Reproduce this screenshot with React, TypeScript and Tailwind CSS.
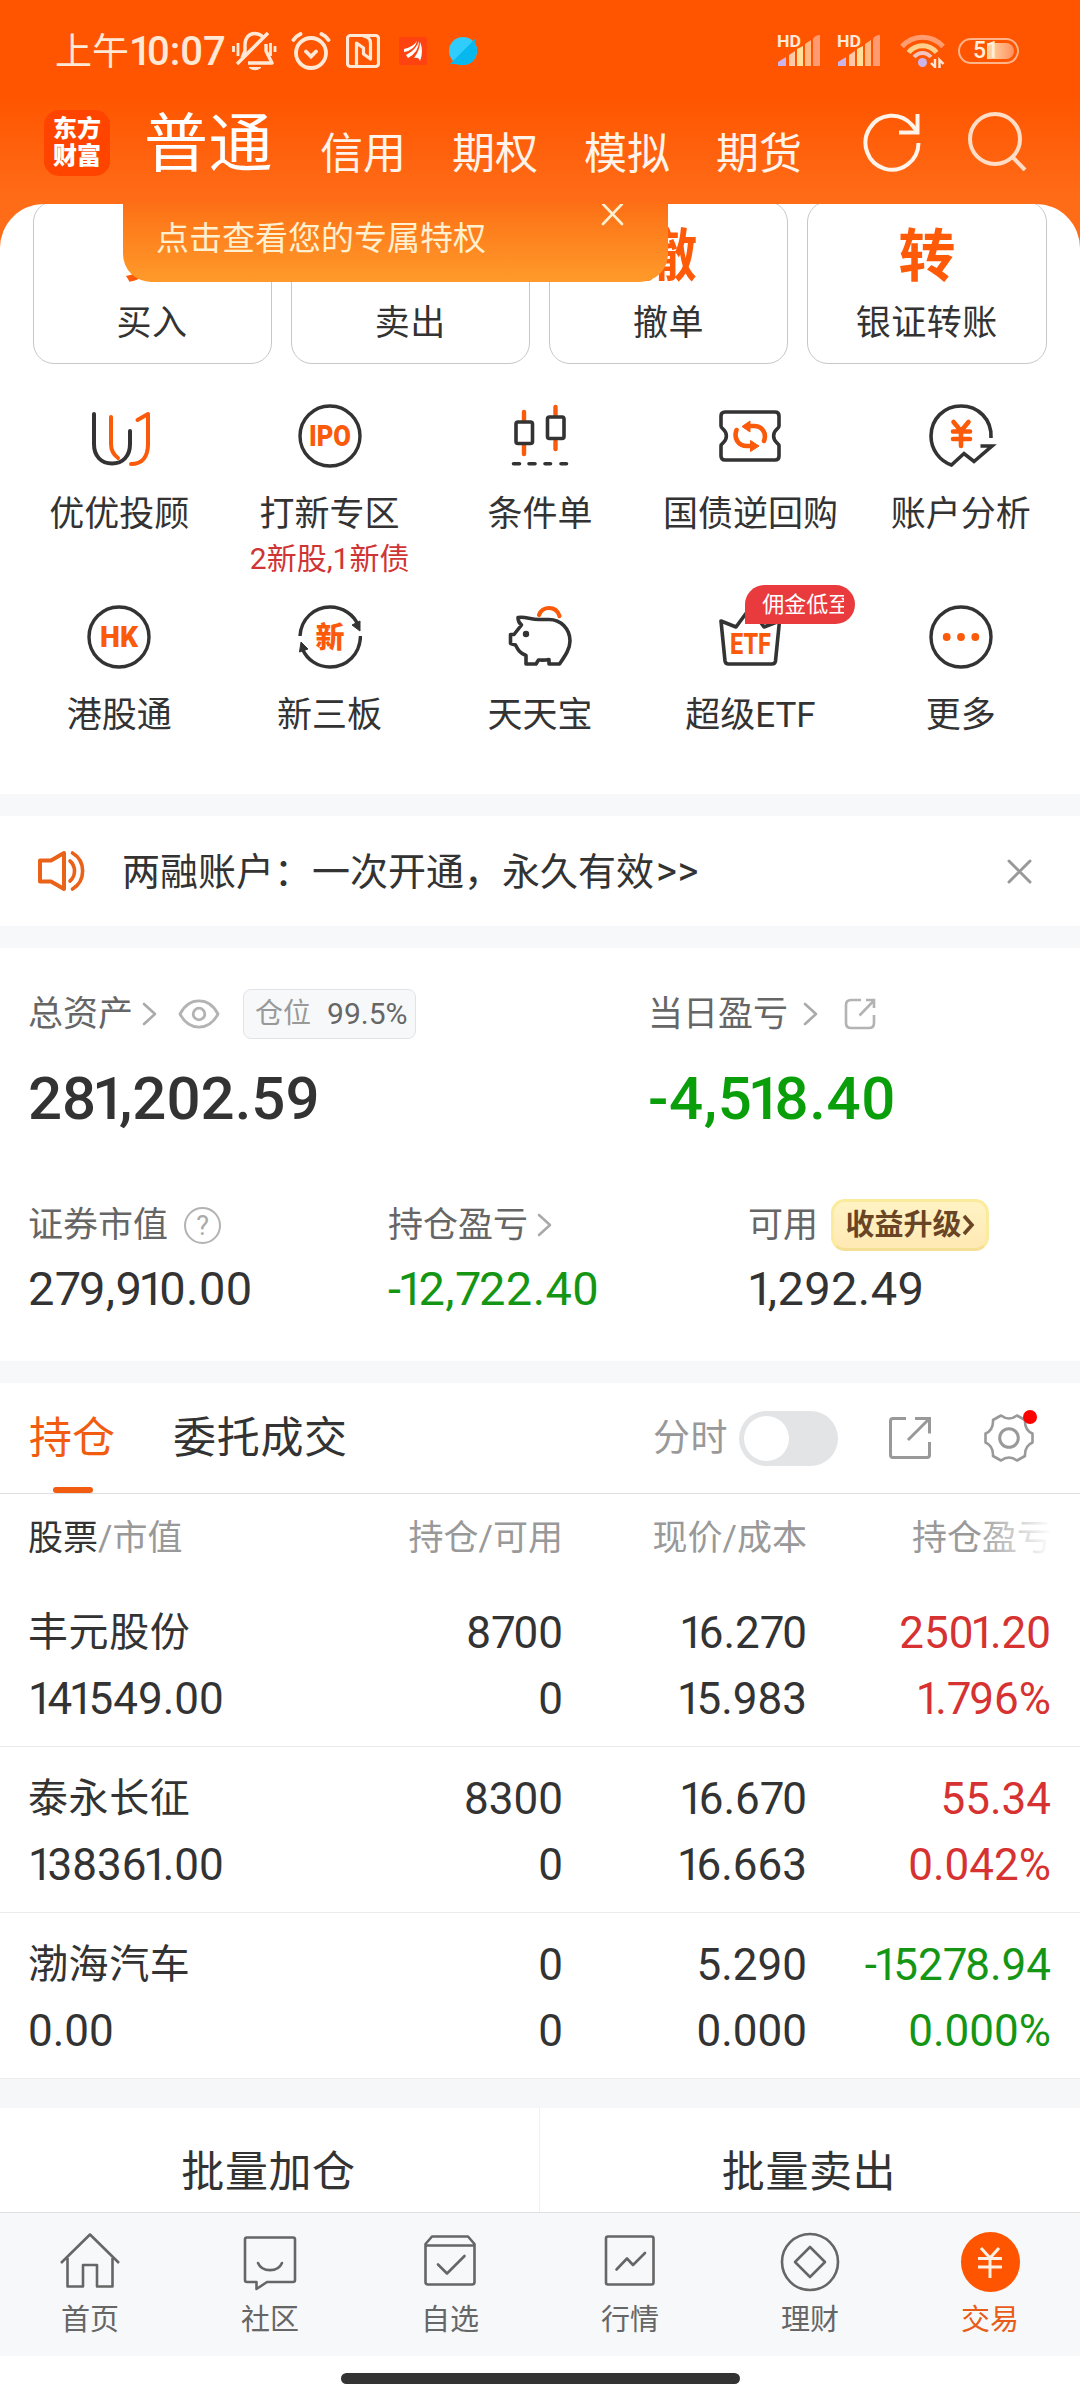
import React from 'react';

interface Shortcut {
  label: string;
  icon: React.ReactNode;
  note?: string;
  badge?: string;
}

interface Holding {
  name: string;
  marketValue: string;
  position: string;
  available: string;
  price: string;
  cost: string;
  profit: string;
  ratio: string;
  up: boolean;
}

const DARK = '#333333';
const ORANGE = '#fa5a0a';

// Figures "1" and "7" are set tighter than the other digits,
// and so is whatever stands right before a "1"
const Num: React.FC<{ value: string }> = ({ value }) => (
  <>
    {value.split(/([^1](?=1)|1|7)/).map((part, idx) => {
      if (idx % 2 === 0) return part;
      if (part === '1') {
        return <span key={idx} className="tracking-[-0.12em]">1</span>;
      }
      if (part === '7') {
        return <span key={idx} className="tracking-[-0.05em]">7</span>;
      }
      return <span key={idx} className="tracking-[-0.07em]">{part}</span>;
    })}
  </>
);

const Chevron = () => (
  <svg className="w-4 h-6" viewBox="0 0 16 24" fill="none" stroke="#aaaaaa" strokeWidth="2.6" strokeLinecap="round" strokeLinejoin="round">
    <path d="M2 2L13 12L2 22" />
  </svg>
);

const CircleText: React.FC<{ text: string; width: number }> = ({ text, width }) => (
  <svg className="w-16 h-16" viewBox="0 0 64 64">
    <circle cx="32" cy="32" r="30" fill="none" stroke={DARK} strokeWidth="3.4" />
    <text x="32" y="42" textAnchor="middle" textLength={width} lengthAdjust="spacingAndGlyphs" fontSize="29" fontWeight="900" fill={ORANGE}>
      {text}
    </text>
  </svg>
);

const shortcuts: Shortcut[] = [
  {
    label: '优优投顾',
    icon: (
      <svg className="w-16 h-16" viewBox="0 0 64 64" fill="none" strokeWidth="4" strokeLinecap="round" strokeLinejoin="round">
        <path d="M7 10V40C7 52 14 59.5 25 59.5S43 52 43 40V27" stroke={DARK} />
        <path d="M24 13V40C24 47 27 51 31 54M50.5 16L61 10V40C61 53 55 60 44 60" stroke={ORANGE} />
      </svg>
    ),
  },
  { label: '打新专区', note: '2新股,1新债', icon: <CircleText text="IPO" width={42} /> },
  {
    label: '条件单',
    icon: (
      <svg className="w-16 h-16" viewBox="0 0 64 64" fill="none" strokeWidth="3.6" strokeLinecap="round">
        <path d="M16 8V17M16 41V50M47.5 3V12M47.5 37V45" stroke={ORANGE} strokeWidth="4.4" />
        <rect x="8" y="18" width="16.5" height="21.5" rx="2" stroke={DARK} />
        <rect x="39.5" y="13" width="16.5" height="21.5" rx="2" stroke={DARK} />
        <path d="M5.5 59.7H11.5M21 59.7H27M37 59.7H42.5M53 59.7H58.5" stroke={DARK} />
      </svg>
    ),
  },
  {
    label: '国债逆回购',
    icon: (
      <svg className="w-16 h-16" viewBox="0 0 64 64" fill="none" strokeWidth="3.6" strokeLinejoin="round">
        <path
          d="M7 8H57Q61 8 61 12V22Q61 23.5 59 25C54.5 29 54.5 35 59 39Q61 40.5 61 42V52Q61 56 57 56H7Q3 56 3 52V42Q3 40.5 5 39C9.5 35 9.5 29 5 25Q3 23.5 3 22V12Q3 8 7 8Z"
          stroke={DARK}
        />
        <path d="M18.5 26C15.5 34 20 42 29 42H33M46 37C49 29 44 22 36 22H31" stroke={ORANGE} strokeWidth="4.6" strokeLinecap="round" />
        <path d="M32 17V28L24 22.5ZM32.5 36.5V47.5L41 42Z" fill={ORANGE} stroke={ORANGE} strokeWidth="1" />
      </svg>
    ),
  },
  {
    label: '账户分析',
    icon: (
      <svg className="w-16 h-16 overflow-visible" viewBox="0 0 64 64" fill="none" strokeWidth="3.6">
        <path d="M62 34C63 15 49 2 32 2C15 2 2 15 2 32C2 46 11 57 22.5 61L35 49.5L45 57.5L63 42H51.5" stroke={DARK} />
        <path d="M24.5 18L32 27L39.5 18M24 27.5H41M24 35H41M32 27V42" stroke={ORANGE} strokeWidth="4.6" strokeLinecap="round" />
      </svg>
    ),
  },
  { label: '港股通', icon: <CircleText text="HK" width={38} /> },
  {
    label: '新三板',
    icon: (
      <svg className="w-16 h-16" viewBox="0 0 64 64">
        <path d="M2 31C3 14 16 2 32 2C45 2 56 10 60 20M62.5 31C62 49 49 62 32 62C20 62 9 55 4.5 44" fill="none" stroke={DARK} strokeWidth="3.4" />
        <path d="M54 20L62 16V26ZM1.5 47L3 37L10 44Z" fill={DARK} stroke={DARK} strokeWidth="1" />
        <text x="32" y="43" textAnchor="middle" fontSize="29" fontWeight="900" fill={ORANGE}>新</text>
      </svg>
    ),
  },
  {
    label: '天天宝',
    icon: (
      <svg className="w-16 h-16" viewBox="0 0 64 64" fill="none" strokeWidth="3.6" strokeLinejoin="round">
        <path d="M31 10C34 1 48 0 51.5 11" stroke={ORANGE} strokeWidth="4.2" strokeLinecap="round" />
        <path
          d="M10 12.5C17 11 22 14.5 31 14.5H41C53 14.5 62 24 62 36C62 44 57 51 51.5 59H41V54.5C36 55.5 33 55 30.5 55L28 59H18V50.5C12 48 10 45 7.5 40L2.5 38.5V29.5H6L13.5 20C11 18 10 16 10 12.5Z"
          stroke={DARK}
        />
        <circle cx="18" cy="29" r="3.2" fill={DARK} />
      </svg>
    ),
  },
  {
    label: '超级ETF',
    badge: '佣金低至',
    icon: (
      <svg className="w-16 h-16" viewBox="0 0 64 64">
        <path d="M3 16L18 22L32 3L46 22L61.5 16L57.5 56Q57 59 54 59H10.5Q7.5 59 7 56Z" fill="none" stroke={DARK} strokeWidth="3.6" strokeLinejoin="round" />
        <text x="32.5" y="48.5" textAnchor="middle" textLength="41" lengthAdjust="spacingAndGlyphs" fontSize="29" fontWeight="800" fill={ORANGE}>
          ETF
        </text>
      </svg>
    ),
  },
  {
    label: '更多',
    icon: (
      <svg className="w-16 h-16" viewBox="0 0 64 64">
        <circle cx="32" cy="32" r="30" fill="none" stroke={DARK} strokeWidth="3.4" />
        <g fill={ORANGE}>
          <circle cx="17.7" cy="32" r="3.9" />
          <circle cx="32" cy="32" r="3.9" />
          <circle cx="46.3" cy="32" r="3.9" />
        </g>
      </svg>
    ),
  },
];

const actions = [
  { mark: '买', label: '买入' },
  { mark: '卖', label: '卖出' },
  { mark: '撤', label: '撤单' },
  { mark: '转', label: '银证转账' },
];

const holdings: Holding[] = [
  { name: '丰元股份', marketValue: '141549.00', position: '8700', available: '0', price: '16.270', cost: '15.983', profit: '2501.20', ratio: '1.796%', up: true },
  { name: '泰永长征', marketValue: '138361.00', position: '8300', available: '0', price: '16.670', cost: '16.663', profit: '55.34', ratio: '0.042%', up: true },
  { name: '渤海汽车', marketValue: '0.00', position: '0', available: '0', price: '5.290', cost: '0.000', profit: '-15278.94', ratio: '0.000%', up: false },
];

const tabs = [
  {
    label: '首页',
    icon: <path d="M2 31L31 2.5L60 31M8.5 26V54.5H24V33H38V54.5H53.5V26" />,
  },
  {
    label: '社区',
    icon: (
      <>
        <path d="M8 5.5H54Q56 5.5 56 7.5V48Q56 50 54 50H28L17.5 57V50H8Q6 50 6 48V7.5Q6 5.5 8 5.5Z" />
        <path d="M19 31C23 40.5 39 40.5 43 31" strokeLinecap="round" />
      </>
    ),
  },
  {
    label: '自选',
    icon: (
      <>
        <path d="M13 4.5H49L55.5 12V50Q55.5 52.5 53 52.5H9Q6.5 52.5 6.5 50V12ZM6.5 13.5H55.5" />
        <path d="M19 32.5L28 41.5L45.5 24" strokeLinecap="round" />
      </>
    ),
  },
  {
    label: '行情',
    icon: (
      <>
        <rect x="7" y="4.5" width="47.5" height="48" rx="2" />
        <path d="M17.5 37.5L28 26.5L34 33L46 21" strokeLinecap="round" />
      </>
    ),
  },
  {
    label: '理财',
    icon: (
      <>
        <circle cx="31" cy="30" r="28" />
        <path d="M31 15L46 30L31 45L16 30Z" />
      </>
    ),
  },
  { label: '交易', active: true },
];

const Signal = () => (
  <svg className="w-[44px] h-8 overflow-visible" viewBox="0 0 44 32">
    <path d="M1 31V27L9 22V31Z" fill="#cdb4e8" />
    <path d="M12 31V20L18 16V31Z" fill="#ffc9a8" />
    <path d="M20 31V14L26 11V31Z" fill="#ffdf9a" />
    <path d="M28 31V9L34 5V31Z" fill="#ffb982" />
    <path d="M36 31V4Q38 0 43 0V31Z" fill="#ff9a72" />
    <text x="0" y="12" fontSize="16.5" fontWeight="700" fill="#ffe9d6" textLength="24" lengthAdjust="spacingAndGlyphs">HD</text>
  </svg>
);

const StatusBar = () => (
  <div className="h-[102px] flex items-center pl-[55px] pr-[61px]">
    <span className="w-[169px] text-[37px] leading-10 whitespace-nowrap text-[#ffe9d6] pt-[2px]">
      上午<span className="text-[40px] font-medium"><Num value="10:07" /></span>
    </span>
    <svg className="ml-[8px] w-[45px] h-10" viewBox="0 0 45 40" fill="none" stroke="#ffe9d6" strokeWidth="3.4">
      <path d="M10 27L13 20V14C13 7 17 2.5 22.5 2.5C26 2.5 29 4 31 6M34 13V20L40 32H16" strokeLinejoin="round" />
      <path d="M5 33L36 2" />
      <path d="M1.5 15V21M6 12V25M38.5 12V25M43 15V21" strokeWidth="2.8" />
      <path d="M17 36.5H29Q23 41 17 36.5Z" fill="#ffe9d6" strokeWidth="1" />
    </svg>
    <svg className="ml-[14px] w-10 h-10" viewBox="0 0 40 40" fill="none" stroke="#ffe9d6" strokeWidth="3.8" strokeLinecap="round">
      <circle cx="20" cy="22" r="15" />
      <path d="M2.5 9Q5 5 9.5 3M37.5 9Q35 5 30.5 3M15 20.5L20 25.5L25 20.5" />
    </svg>
    <svg className="ml-[15px] w-[34px] h-[34px]" viewBox="0 0 34 34" fill="none" stroke="#ffe9d6" strokeWidth="3.2" strokeLinejoin="round">
      <rect x="1.5" y="1.5" width="31" height="31" rx="3" />
      <path d="M10.5 32V9L17.5 14V20L24.5 25V9Q24.5 3 17 2" />
    </svg>
    <svg className="ml-[19px] w-7 h-7" viewBox="0 0 28 28">
      <rect width="28" height="28" rx="2" fill="#ff4310" />
      <path d="M5 12Q14 10 18 4Q16 13 5 15ZM7 18Q17 13 20 4Q20 15 9 21ZM15 21Q21 13 21 5Q25 14 21 24Q20 20 15 21Z" fill="#ffffff" />
    </svg>
    <svg className="ml-[22px] w-7 h-7" viewBox="0 0 28 28">
      <circle cx="14" cy="14" r="14" fill="#30ccfb" />
      <path d="M27 1L1 27H7Q11 28.5 16 28Q27 26 28 14Q28 9 25.5 6Z" fill="#06b8ee" />
    </svg>
    <div className="flex-1" />
    <Signal />
    <div className="w-4" />
    <Signal />
    <svg className="ml-[19px] w-[46px] h-[34px]" viewBox="0 0 46 34" fill="none" strokeWidth="5">
      <path d="M2 12.5C13 0 32 0 43 12.5" stroke="#ff9d70" />
      <path d="M8.5 18.5C16 9.5 29 9.5 36.5 18.5" stroke="#ffd08c" />
      <path d="M14 23C19 17.5 26 17.5 31 23" stroke="#f3c3c0" strokeWidth="4" />
      <circle cx="22.5" cy="28.5" r="4.5" fill="#cdb4e8" />
      <path d="M35 25V33L31 29M39.5 34V26L43.5 30" stroke="#ffe9d6" strokeWidth="2.4" />
    </svg>
    <div className="ml-[12px] w-[61px] h-[26px] rounded-full border-[2.5px] border-[#ffb48a] p-[3px] relative">
      <div className="ml-[24px] h-full rounded-r-full bg-linear-to-r from-[#ffd9a8] to-[#ff9160]" />
      <span className="absolute left-[13px] top-[-1px] text-[23px] leading-6 font-medium text-[#ffeedd]">51</span>
    </div>
  </div>
);

const Header = () => (
  <header className="h-[204px] shrink-0 bg-[linear-gradient(#ff5500_96px,#ff6d19_204px)]">
    <StatusBar />
    <div className="h-[82px] flex items-center pl-11 text-white">
      <div className="w-[66px] h-[66px] rounded-[15px] bg-[#ff4400] flex items-center justify-center text-[24px] leading-[27px] font-black text-center">
        东方<br />财富
      </div>
      <span className="ml-[34px] w-[136px] text-[64px] leading-[80px] pt-[3px] tracking-[0.5px]">普通</span>
      <nav className="ml-[40px] mt-[22px] flex gap-[46px] text-[43px] leading-[48px] text-[#fff3ea]">
        <span>信用</span>
        <span>期权</span>
        <span>模拟</span>
        <span>期货</span>
      </nav>
      <svg className="ml-[60px] -mt-[2px] w-[60px] h-[60px]" viewBox="0 0 60 60" fill="none" stroke="#fff3ea" strokeWidth="4">
        <path d="M56.5 31A26.5 27 0 1 1 50 13L55.5 20" />
        <path d="M55.5 2V20.5H37" />
      </svg>
      <svg className="ml-[45px] -mt-[4px] w-[60px] h-[60px]" viewBox="0 0 60 60" fill="none" stroke="#ffdcc6" strokeWidth="4">
        <circle cx="28" cy="28" r="25" />
        <path d="M45.5 46L58 59" />
      </svg>
    </div>
  </header>
);

const QuickTrade = () => (
  <section className="h-[590px] shrink-0 bg-[#ff6c18]">
    <div className="relative h-full bg-white rounded-t-[44px] overflow-hidden">
      <div className="-mt-[3px] pl-[32.5px] pr-[33.5px] grid grid-cols-4 gap-[19px]">
        {actions.map(item => (
          <div key={item.label} className="h-[163px] rounded-[21px] border border-[#c8c8c8] flex flex-col items-center pt-[23px]">
            <span className="text-[57px] leading-[64px] font-bold text-[#ff5a08]">{item.mark}</span>
            <span className="mt-[15px] text-[35px] leading-10 tracking-[0.5px] text-[#333333]">{item.label}</span>
          </div>
        ))}
      </div>

      <div className="mt-10 px-[14px] grid grid-cols-5">
        {shortcuts.map(item => (
          <div key={item.label} className="relative h-[201px] flex flex-col items-center">
            {item.icon}
            <span className="mt-[27px] text-[35px] leading-10 text-[#333333] whitespace-nowrap">{item.label}</span>
            {item.note && <span className="mt-[8px] text-[30px] leading-8 text-[#d03535] whitespace-nowrap">{item.note}</span>}
            {item.badge && (
              <div className="absolute left-[100px] -top-5 w-[110px] h-[39px] bg-[#e93b3d] rounded-full rounded-bl-none pl-[17px]">
                <div className="w-[82px] overflow-hidden whitespace-nowrap text-[22px] leading-[40px] text-white">{item.badge}</div>
              </div>
            )}
          </div>
        ))}
      </div>

      {/* Privilege hint hanging from the header */}
      <div className="absolute left-[123px] top-0 w-[545px] h-[78px] rounded-b-[28px] bg-linear-to-b from-[#fc7015] to-[#ff9a2a] pl-[33px]">
        <span className="text-[33px] leading-[69px] text-[#fff0cf]">点击查看您的专属特权</span>
        <svg className="absolute left-[478px] -top-px w-[23px] h-[23px]" viewBox="0 0 23 23" stroke="#fff0cf" strokeWidth="2.6" strokeLinecap="round">
          <path d="M2 1L21 21M21 1L2 21" />
        </svg>
      </div>
    </div>
  </section>
);

const Notice = () => (
  <section className="h-[154px] shrink-0 border-y-[22px] border-[#f7f8fa] flex items-center pl-[37px] pr-12">
    <svg className="w-12 h-[42px]" viewBox="0 0 48 42" fill="none" stroke="#ea6118" strokeWidth="4">
      <path d="M3 10.5H14L27 3V39L14 31.5H3Z" strokeLinejoin="round" />
      <path d="M33 11C39 16 39 26 33 31M35.5 3C49 11 49 31 35.5 39" strokeWidth="3.6" strokeLinecap="round" />
    </svg>
    <span className="ml-[37px] flex-1 text-[38px] leading-[48px] pt-[2px] text-[#333333]">
      两融账户：一次开通，永久有效<span className="ml-[2px] text-[40px] tracking-[0.5px]">&gt;&gt;</span>
    </span>
    <svg className="w-[25px] h-[25px]" viewBox="0 0 25 25" stroke="#999999" strokeWidth="3" strokeLinecap="round">
      <path d="M2 2L23 23M23 2L2 23" />
    </svg>
  </section>
);

const Assets = () => (
  <section className="h-[435px] shrink-0 border-b-[22px] border-[#f7f8fa] pl-[28px] text-[35px] leading-[50px] text-[#666666]">
    <div className="pt-[41px] flex">
      <div className="w-[620px]">
        <div className="flex items-center h-[50px]">
          <span className="pt-[2px]">总资产</span>
          <div className="ml-[9px] flex"><Chevron /></div>
          <svg className="ml-[20px] w-[42px] h-[30px]" viewBox="0 0 42 30" fill="none" stroke="#b3b3b3" strokeWidth="2.8">
            <path d="M2 15C11 -2.5 31 -2.5 40 15C31 32.5 11 32.5 2 15Z" strokeLinejoin="round" />
            <circle cx="21" cy="15" r="5.8" />
          </svg>
          <div className="ml-[23px] w-[173px] h-[50px] rounded-lg border border-[#e2e3e6] bg-[#f7f8fa] flex items-center px-[11px] leading-10 whitespace-nowrap">
            <span className="text-[28px] text-[#999999]">仓位</span>
            <span className="ml-[16px] text-[30px]">99.5%</span>
          </div>
        </div>
        <div className="mt-[25px] text-[60px] leading-[70px] font-medium text-[#333333]"><Num value="281,202.59" /></div>
      </div>
      <div>
        <div className="flex items-center h-[50px]">
          <span className="pt-[2px]">当日盈亏</span>
          <div className="ml-[15px] flex"><Chevron /></div>
          <svg className="ml-[25px] w-8 h-8" viewBox="0 0 32 32" fill="none" stroke="#b3b3b3" strokeWidth="2.6">
            <path d="M17 2H7Q2 2 2 7V25Q2 30 7 30H25Q30 30 30 25V17M15.5 17.5L29 3.5M22 2H30V10" />
          </svg>
        </div>
        <div className="mt-[25px] text-[60px] leading-[70px] font-medium tracking-[0.6px] text-[#0a9f0a]"><Num value="-4,518.40" /></div>
      </div>
    </div>

    <div className="mt-[66px] flex">
      <div className="w-[360px] flex items-center h-[50px]">
        <span className="pt-[2px]">证券市值</span>
        <div className="ml-[16px] w-[37px] h-[37px] rounded-full border-[2.5px] border-[#b3b3b3] text-[#aaaaaa] text-[27px] leading-[34px] text-center">?</div>
      </div>
      <div className="w-[360px] flex items-center h-[50px]">
        <span className="pt-[2px]">持仓盈亏</span>
        <div className="ml-[9px] flex"><Chevron /></div>
      </div>
      <div className="flex items-center h-[50px]">
        <span className="pt-[2px]">可用</span>
        <div className="ml-[13px] w-[158px] h-[52px] rounded-[14px] border-[3px] border-[#fbeb9c] border-b-[#f5df94] bg-linear-to-b from-[#fff3c4] to-[#ffe9b4] flex items-center justify-center text-[29px] leading-[44px] font-bold text-[#694526] whitespace-nowrap">
          收益升级
          <svg className="w-[13px] h-[22px]" viewBox="0 0 13 22" fill="none" stroke="#694526" strokeWidth="3.6">
            <path d="M2 2L10 11L2 20" />
          </svg>
        </div>
      </div>
    </div>
    <div className="mt-[14px] flex text-[47px] leading-[50px] tracking-[0.4px] text-[#333333]">
      <div className="w-[360px]"><Num value="279,910.00" /></div>
      <div className="w-[359px] text-[#149614]"><Num value="-12,722.40" /></div>
      <div><Num value="1,292.49" /></div>
    </div>
  </section>
);

const HoldingTabs = () => (
  <div className="h-[111px] shrink-0 border-b border-[#dedede] flex items-center pl-[29px] pr-[46px]">
    <div className="relative h-full flex items-center text-[43px] leading-[56px] text-[#f25c10]">
      持仓
      <div className="absolute left-[24px] bottom-0 w-10 h-[6px] rounded-[3px] bg-[#f25c10]" />
    </div>
    <span className="ml-[58px] text-[43px] leading-[56px] tracking-[0.7px] text-[#333333]">委托成交</span>
    <span className="ml-auto text-[37px] leading-[50px] pt-[2px] tracking-[0.5px] text-[#999999]">分时</span>
    <div className="ml-[11px] w-[99px] h-[55px] rounded-full bg-[#e3e4e6] p-[5px]">
      <div className="w-[45px] h-[45px] rounded-full bg-white" />
    </div>
    <svg className="ml-[51px] w-[42px] h-[42px]" viewBox="0 0 42 42" fill="none" stroke="#999999" strokeWidth="3">
      <path d="M17 1.5H4Q1.5 1.5 1.5 4V38Q1.5 40.5 4 40.5H38Q40.5 40.5 40.5 38V25M19 23L40 2M26 1.5H40.5V16.5" />
    </svg>
    <div className="relative ml-[53px]">
      <svg className="w-[50px] h-12" viewBox="0 0 50 48" fill="none" stroke="#999999" strokeWidth="2.6" strokeLinejoin="round">
        <path d="M17 1.5Q25 7.5 33 1.5L41 6Q40.5 16 48.5 19.5V28.5Q40.5 32 41 42L33 46.5Q25 40.5 17 46.5L9 42Q9.5 32 1.5 28.5V19.5Q9.5 16 9 6Z" />
        <circle cx="25" cy="24" r="9.3" strokeWidth="3" />
      </svg>
      <div className="absolute right-[-3px] -top-1 w-[14px] h-[14px] rounded-full bg-[#ff0000]" />
    </div>
  </div>
);

const HoldingTable = () => (
  <section className="shrink-0 text-[#333333]">
    <div className="h-[87px] pl-[28px] pr-[29px] grid grid-cols-[270px_265px_244px_245px] text-right text-[35px] leading-[90px] text-[#999999]">
      <div className="text-left"><span className="text-[#333333]">股票</span>/市值</div>
      <div>持仓/可用</div>
      <div>现价/成本</div>
      <div className="relative whitespace-nowrap">
        持仓盈亏
        <div className="absolute right-0 top-0 w-[70px] h-full bg-linear-to-r from-white/10 to-white" />
      </div>
    </div>
    {holdings.map(item => (
      <div key={item.name} className="h-[166px] border-b border-[#ececec] pl-[28px] pr-[29px] pt-[19px] grid grid-cols-[270px_265px_244px_244px] auto-rows-[66px] text-right text-[44px] leading-[66px]">
        <div className="text-left text-[40px] tracking-[0.6px]">{item.name}</div>
        <div><Num value={item.position} /></div>
        <div><Num value={item.price} /></div>
        <div className={item.up ? 'text-[#d63232]' : 'text-[#149614]'}><Num value={item.profit} /></div>
        <div className="text-left"><Num value={item.marketValue} /></div>
        <div><Num value={item.available} /></div>
        <div><Num value={item.cost} /></div>
        <div className={item.up ? 'text-[#d63232]' : 'text-[#149614]'}><Num value={item.ratio} /></div>
      </div>
    ))}
  </section>
);

const TabBar = () => (
  <nav className="h-[144px] shrink-0 border-t border-[#e0e0e0] bg-[#f7f8fa] grid grid-cols-6">
    {tabs.map(tab => (
      <div key={tab.label} className="flex flex-col items-center pt-[19px]">
        {tab.active ? (
          <div className="w-[59px] h-[60px] rounded-full bg-[#ff5500] flex items-center justify-center">
            <svg className="w-7 h-8" viewBox="0 0 28 32" fill="none" stroke="#fff0e4" strokeWidth="3">
              <path d="M5 2L14 12L23 2M2 12.5H26M2 21H26M14 12V32" />
            </svg>
          </div>
        ) : (
          <svg className="w-[62px] h-[60px]" viewBox="0 0 62 60" fill="none" stroke="#666666" strokeWidth="2.6" strokeLinejoin="round">
            {tab.icon}
          </svg>
        )}
        <span className={`mt-[8px] text-[29px] leading-10 ${tab.active ? 'text-[#e65c18]' : 'text-[#666666]'}`}>{tab.label}</span>
      </div>
    ))}
  </nav>
);

export default function App() {
  return (
    <div className="w-[1080px] h-[2400px] overflow-hidden bg-white flex flex-col font-[Roboto,'Noto_Sans_CJK_SC',sans-serif]">
      <Header />
      <QuickTrade />
      <Notice />
      <Assets />
      <HoldingTabs />
      <HoldingTable />
      <div className="h-[133px] shrink-0 border-t-[29px] border-[#f6f7f9] grid grid-cols-2 text-center text-[43px] leading-[128px] tracking-[0.6px] text-[#333333]">
        <div className="border-r border-[#f0f0f0] pr-[2px]">批量加仓</div>
        <div className="pr-[2px]">批量卖出</div>
      </div>
      <TabBar />
      <div className="flex-1 flex justify-center pt-[17px]">
        <div className="w-[399px] h-[11px] rounded-full bg-[#333333]" />
      </div>
    </div>
  );
}
